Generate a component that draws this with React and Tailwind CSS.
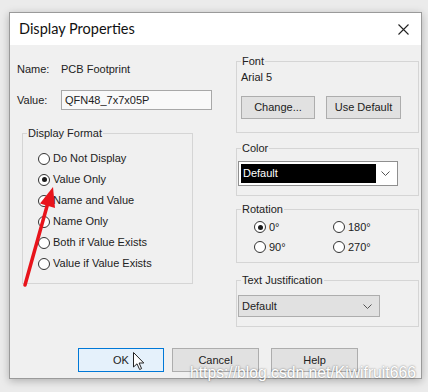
import React from "react";

function Group({ title, className = "", children }) {
  return (
    <div className={`border border-[#d5d5d5] ${className}`}>
      <div className="relative -mt-[7px] ml-[4px] w-fit bg-[#f0f0f0] px-[1px] leading-[13px]">
        {title}
      </div>
      {children}
    </div>
  );
}

function Radio({ checked, label, h = "h-[21px]" }) {
  return (
    <div className={`flex items-center ${h}`}>
      <span className="flex h-[12px] w-[12px] items-center justify-center rounded-full border border-[#333] bg-white">
        {checked && <span className="h-[5px] w-[5px] rounded-full bg-[#1a1a1a]" />}
      </span>
      <span className="ml-[3px]">{label}</span>
    </div>
  );
}

function Chevron() {
  return (
    <svg width="9" height="5" viewBox="0 0 9 5">
      <polyline points="0.5,0.5 4.5,4.5 8.5,0.5" fill="none" stroke="#555" strokeWidth="1" />
    </svg>
  );
}

function Button({ children, className = "" }) {
  return (
    <div
      className={`flex items-center justify-center border border-[#adadad] bg-[#e1e1e1] ${className}`}
    >
      {children}
    </div>
  );
}

export default function App() {
  return (
    <div className="relative h-[392px] w-[428px] overflow-hidden bg-[#ebebeb] pl-[9px] pt-[12px] font-['Liberation_Sans',Arial,sans-serif] text-[11px] leading-[13px] text-[#222]">
      {/* Dialog */}
      <div className="flex h-[367px] w-[413px] flex-col border border-[#9a9a9a] bg-[#f0f0f0] shadow-[0_2px_8px_rgba(0,0,0,0.25)]">
        {/* Title bar */}
        <div className="flex h-[32px] shrink-0 items-center justify-between bg-white pl-[9px] pr-[12px]">
          <span className="font-['Lato',sans-serif] text-[14.5px] leading-[20px] text-[#111]">
            Display Properties
          </span>
          <svg width="11" height="11" viewBox="0 0 11 11">
            <path d="M0.5 0.5 L10.5 10.5 M10.5 0.5 L0.5 10.5" stroke="#222" strokeWidth="1.1" />
          </svg>
        </div>

        {/* Body */}
        <div className="flex flex-1 flex-col">
          <div className="flex">
            {/* Left column */}
            <div className="w-[226px]">
              <div className="mt-[18px] flex pl-[7px]">
                <span className="w-[44px]">Name:</span>
                <span>PCB Footprint</span>
              </div>
              <div className="mt-[14px] flex h-[20px] items-center pl-[7px]">
                <span className="w-[44px]">Value:</span>
                <div className="flex h-[20px] w-[151px] items-center border border-[#a8a8a8] bg-[#f9f9f9] pl-[3px]">
                  QFN48_7x7x05P
                </div>
              </div>
              <Group title="Display Format" className="ml-[12px] mt-[23px] h-[151px] w-[171px]">
                <div className="pl-[15px] pt-[8px]">
                  <Radio label="Do Not Display" />
                  <Radio label="Value Only" checked />
                  <Radio label="Name and Value" />
                  <Radio label="Name Only" />
                  <Radio label="Both if Value Exists" />
                  <Radio label="Value if Value Exists" />
                </div>
              </Group>
            </div>

            {/* Right column */}
            <div className="w-[183px]">
              <Group title="Font" className="mt-[16px] h-[72px]">
                <div className="mt-[3px] pl-[4px]">Arial 5</div>
                <div className="mt-[12px] flex pl-[4px]">
                  <Button className="h-[23px] w-[74px]">Change...</Button>
                  <Button className="ml-[11px] h-[23px] w-[75px]">Use Default</Button>
                </div>
              </Group>

              <Group title="Color" className="mt-[15px] h-[48px]">
                <div className="ml-[1px] mt-[6px] flex h-[25px] w-[160px] items-center border border-[#8f8f8f] bg-white p-[2px]">
                  <div className="flex h-full w-[135px] items-center bg-black pl-[2px] text-white">
                    Default
                  </div>
                  <div className="flex flex-1 justify-center">
                    <Chevron />
                  </div>
                </div>
              </Group>

              <Group title="Rotation" className="mt-[13px] h-[54px]">
                <div className="mt-[1px] grid grid-cols-[79px_79px] pl-[17px]">
                  <Radio label="0°" checked h="h-[20px]" />
                  <Radio label="180°" h="h-[20px]" />
                  <Radio label="90°" h="h-[20px]" />
                  <Radio label="270°" h="h-[20px]" />
                </div>
              </Group>

              <Group title="Text Justification" className="mt-[17px] h-[47px]">
                <div className="ml-[1px] mt-[8px] flex h-[22px] w-[142px] items-center justify-between border border-[#adadad] bg-[#e1e1e1] pl-[3px] pr-[7px]">
                  <span>Default</span>
                  <Chevron />
                </div>
              </Group>
            </div>
          </div>

          {/* Buttons */}
          <div className="mt-[21px] flex pl-[68px]">
            <div className="flex h-[24px] w-[86px] items-center justify-center border border-[#0078d7] bg-[#e5f1fb]">
              OK
            </div>
            <Button className="ml-[8px] h-[24px] w-[87px]">Cancel</Button>
            <Button className="ml-[12px] h-[24px] w-[87px]">Help</Button>
          </div>
        </div>
      </div>

      {/* Mouse cursor */}
      <svg className="absolute left-[133px] top-[352px]" width="13" height="19" viewBox="0 0 13 19">
        <path
          d="M0.5 0.5 L0.5 15 L4 11.8 L6.6 17.5 L8.6 16.6 L6.1 11 L10.8 11 Z"
          fill="white"
          stroke="#222"
          strokeWidth="1"
        />
      </svg>

      {/* Red annotation arrow */}
      <svg className="absolute left-0 top-0" width="428" height="392" viewBox="0 0 428 392">
        <line x1="25" y1="285" x2="47.6" y2="204" stroke="#e8141b" strokeWidth="3.5" strokeLinecap="round" />
        <polygon points="53,187 55,208 40,203.5" fill="#e8141b" />
      </svg>

      {/* Watermark */}
      <div className="absolute left-[190px] top-[363px] font-['Liberation_Sans',Arial,sans-serif] text-[15.7px] leading-[20px] text-white [text-shadow:0_0_2px_rgba(0,0,0,0.55)]">
        https://blog.csdn.net/Kiwifruit666
      </div>
    </div>
  );
}
